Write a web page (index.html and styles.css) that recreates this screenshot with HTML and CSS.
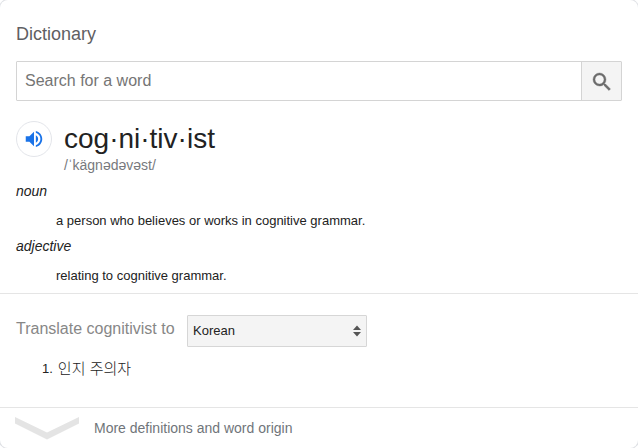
FILE: index.html
```html
<!DOCTYPE html>
<html lang="en">
<head>
<meta charset="utf-8">
<title>Dictionary</title>
<link rel="stylesheet" href="styles.css">
</head>
<body>
<main class="card">
  <section class="entry">
    <h1 class="heading">Dictionary</h1>
    <div class="search">
      <input class="search-input" type="text" placeholder="Search for a word">
      <button class="search-button" aria-label="Search">
        <svg width="24" height="24" viewBox="0 0 24 24" fill="#6c6c6c" stroke="#6c6c6c" stroke-width=".4"><path d="M15.5 14h-.79l-.28-.27A6.47 6.47 0 0 0 16 9.5 6.5 6.5 0 1 0 9.5 16c1.61 0 3.09-.59 4.23-1.57l.27.28v.79l5 4.99L20.49 19l-4.99-5zm-6 0C7.01 14 5 11.99 5 9.5S7.01 5 9.5 5 14 7.01 14 9.5 11.99 14 9.5 14z"/></svg>
      </button>
    </div>
    <div class="word-row">
      <button class="listen" aria-label="Listen">
        <svg width="22" height="22" viewBox="0 0 24 24" fill="#1a73e8"><path d="M3 9v6h4l5 5V4L7 9H3zm13.500 3c0-1.770-1.020-3.290-2.500-4.030v8.050c1.480-.73 2.500-2.250 2.500-4.020zM14 3.230v2.060c2.890.86 5 3.540 5 6.710s-2.110 5.850-5 6.710v2.060c4.010-.91 7-4.490 7-8.770s-2.990-7.860-7-8.770z"/></svg>
      </button>
      <div>
        <div class="word">cog·ni·tiv·ist</div>
        <div class="phonetic">/ˈkäɡnədəvəst/</div>
      </div>
    </div>
    <div class="pos">noun</div>
    <div class="definition">a person who believes or works in cognitive grammar.</div>
    <div class="pos">adjective</div>
    <div class="definition">relating to cognitive grammar.</div>
  </section>
  <section class="translate">
    <div class="translate-row">
      <span class="translate-label">Translate cognitivist to</span>
      <div class="select">
        <span class="select-value">Korean</span>
        <svg width="8" height="12" viewBox="0 0 8 12" fill="#555"><path d="M0 5 4 .5 8 5zM0 7h8L4 11.500z"/></svg>
      </div>
    </div>
    <div class="result"><span>1.</span><span lang="ko" class="korean">인지 주의자</span></div>
  </section>
  <footer class="more">
    <svg class="chevron" width="64" height="23" viewBox="0 0 64 23" fill="#e4e4e4"><path d="M0 0 32 15.500 64 0V6.500L32 22.500 0 6.500z"/></svg>
    <span>More definitions and word origin</span>
  </footer>
</main>
</body>
</html>
```
FILE: styles.css
```css
* { box-sizing: border-box; }
body {
  margin: 0;
  background: #fff;
  font-family: "Liberation Sans", Arial, sans-serif;
  color: #222;
}
.card {
  width: 638px;
  height: 448px;
  display: flex;
  flex-direction: column;
  overflow: hidden;
  border-radius: 8px;
  box-shadow: 0 0 0 1px #dfe1e5;
}
.entry {
  height: 294px;
  padding: 24px 16px 0;
  border-bottom: 1px solid #e5e5e5;
}
.heading {
  margin: 0 0 17px;
  font-size: 18px;
  line-height: 20px;
  font-weight: 400;
  color: #5f6063;
}
.search {
  display: flex;
  height: 40px;
  border: 1px solid #d4d4d4;
  border-radius: 1px;
}
.search-input {
  flex: 1;
  min-width: 0;
  border: 0;
  padding: 0 8px;
  font: 16px "Liberation Sans", Arial, sans-serif;
  background: #fff;
}
.search-input::placeholder { color: #757575; }
.search-button {
  display: flex;
  align-items: center;
  justify-content: center;
  width: 40px;
  padding: 2px 0 0;
  border: 0;
  border-left: 1px solid #d4d4d4;
  background: #f4f4f4;
}
.word-row {
  display: flex;
  gap: 12px;
  height: 80px;
  padding-top: 20px;
}
.listen {
  display: flex;
  align-items: center;
  justify-content: center;
  width: 36px;
  height: 36px;
  padding: 0;
  border: 1px solid #e3e5ea;
  border-radius: 50%;
  background: #fff;
}
.word {
  height: 35px;
  font-size: 28px;
  line-height: 35px;
}
.phonetic {
  font-size: 14px;
  line-height: 18px;
  color: #77797d;
}
.pos {
  font-size: 14px;
  line-height: 20px;
  font-style: italic;
}
.definition {
  height: 35px;
  padding: 10px 0 0 40px;
  font-size: 13px;
  line-height: 20px;
}
.translate {
  height: 114px;
  padding: 21px 16px 0;
  border-bottom: 1px solid #e5e5e5;
}
.translate-row {
  display: flex;
  gap: 12px;
  height: 32px;
}
.translate-label {
  width: 159px;
  font-size: 16px;
  line-height: 27px;
  white-space: nowrap;
  color: #878787;
}
.select {
  display: flex;
  align-items: center;
  justify-content: space-between;
  width: 180px;
  padding: 0 5px;
  border: 1px solid #d6d6d6;
  border-radius: 1px;
  background: #f4f4f4;
  font-size: 13px;
}
.select-value { padding-bottom: 2px; }
.result {
  display: flex;
  gap: 5px;
  padding: 12px 0 0 26px;
  font-size: 13px;
  line-height: 20px;
}
.korean {
  font-family: "Noto Sans CJK KR", sans-serif;
  font-weight: 300;
  font-size: 15px;
  line-height: 18px;
}
.more {
  display: flex;
  gap: 15px;
  padding: 9px 15px 0;
  font-size: 14px;
  line-height: 22px;
  color: #70757a;
}
```
